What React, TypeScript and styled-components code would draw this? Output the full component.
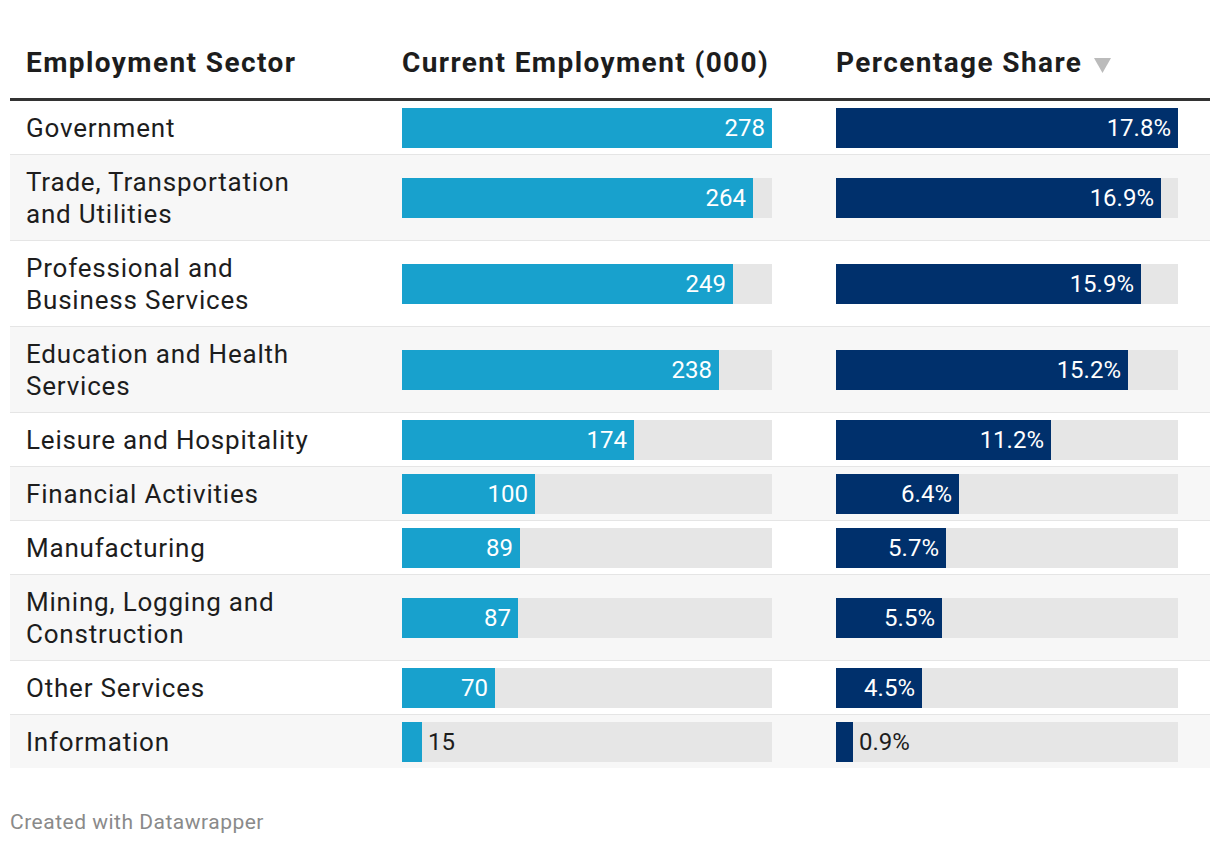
import React from "react";
import styled, { createGlobalStyle } from "styled-components";

const Global = createGlobalStyle`
  html, body { margin: 0; padding: 0; background: #ffffff; }
  body { font-family: Roboto, "Liberation Sans", sans-serif; color: #1d1d1d; }
`;

const Page = styled.div`
  width: 1200px;
  padding: 0 10px;
`;

const Grid = styled.div`
  display: grid;
  grid-template-columns: 392px 434px 374px;
`;

const HeadRow = styled(Grid)`
  border-bottom: 3px solid #333333;
  align-items: end;
`;

const HeadCell = styled.div<{ $first?: boolean }>`
  padding: 46px 0 18px ${(p) => (p.$first ? "16px" : "0")};
  font-size: 28px;
  font-weight: 700;
  letter-spacing: 1.4px;
  line-height: 34px;
  color: #1d1d1d;
  display: flex;
  align-items: center;
  gap: 12px;
  white-space: nowrap;
`;

const SortArrow = styled.svg`
  width: 17px;
  height: 15px;
  margin-top: 4px;
`;

const Row = styled(Grid)<{ $alt: boolean }>`
  background: ${(p) => (p.$alt ? "#f7f7f7" : "#ffffff")};
  border-top: 1px solid #e5e5e5;
  &:first-of-type { border-top: none; }
  align-items: center;
`;

const Label = styled.div`
  padding: 11px 16px 10px 16px;
  font-size: 26px;
  letter-spacing: 0.8px;
  line-height: 32px;
  color: #1d1d1d;
  white-space: nowrap;
`;

const Track = styled.div<{ $w: number }>`
  width: ${(p) => p.$w}px;
  height: 40px;
  background: #e6e6e6;
  display: flex;
`;

const Fill = styled.div<{ $color: string }>`
  height: 100%;
  background: ${(p) => p.$color};
  display: flex;
  align-items: center;
  justify-content: flex-end;
  flex-shrink: 0;
`;

const Value = styled.span<{ $inside: boolean }>`
  font-size: 24px;
  line-height: 40px;
  white-space: nowrap;
  color: ${(p) => (p.$inside ? "#ffffff" : "#1d1d1d")};
  padding: ${(p) => (p.$inside ? "0 7px 0 0" : "0 0 0 6px")};
`;

const Footer = styled.div`
  margin-top: 42px;
  font-size: 21px;
  letter-spacing: 0.5px;
  color: #8a8a8a;
`;

type D = { name: string; emp: number; pct: number };

const data: D[] = [
  { name: "Government", emp: 278, pct: 17.8 },
  { name: "Trade, Transportation\nand Utilities", emp: 264, pct: 16.9 },
  { name: "Professional and\nBusiness Services", emp: 249, pct: 15.9 },
  { name: "Education and Health\nServices", emp: 238, pct: 15.2 },
  { name: "Leisure and Hospitality", emp: 174, pct: 11.2 },
  { name: "Financial Activities", emp: 100, pct: 6.4 },
  { name: "Manufacturing", emp: 89, pct: 5.7 },
  { name: "Mining, Logging and\nConstruction", emp: 87, pct: 5.5 },
  { name: "Other Services", emp: 70, pct: 4.5 },
  { name: "Information", emp: 15, pct: 0.9 },
];

function Bar({ value, max, width, color, text }: { value: number; max: number; width: number; color: string; text: string }) {
  const w = Math.round((value / max) * width);
  const inside = w > 60;
  return (
    <Track $w={width}>
      <Fill $color={color} style={{ width: w }}>
        {inside && <Value $inside>{text}</Value>}
      </Fill>
      {!inside && <Value $inside={false}>{text}</Value>}
    </Track>
  );
}

export default function App() {
  return (
    <Page>
      <Global />
      <HeadRow>
        <HeadCell $first>Employment Sector</HeadCell>
        <HeadCell>Current Employment (000)</HeadCell>
        <HeadCell>
          Percentage Share
          <SortArrow viewBox="0 0 17 15">
            <path d="M0 0 H17 L8.5 15 Z" fill="#bbbbbb" />
          </SortArrow>
        </HeadCell>
      </HeadRow>
      <div>
        {data.map((d, i) => (
          <Row key={d.name} $alt={i % 2 === 1}>
            <Label>
              {d.name.split("\n").map((l, j) => (
                <div key={j}>{l}</div>
              ))}
            </Label>
            <Bar value={d.emp} max={278} width={370} color="#18a1cd" text={String(d.emp)} />
            <Bar value={d.pct} max={17.8} width={342} color="#00306c" text={d.pct.toFixed(1) + "%"} />
          </Row>
        ))}
      </div>
      <Footer>Created with Datawrapper</Footer>
    </Page>
  );
}
